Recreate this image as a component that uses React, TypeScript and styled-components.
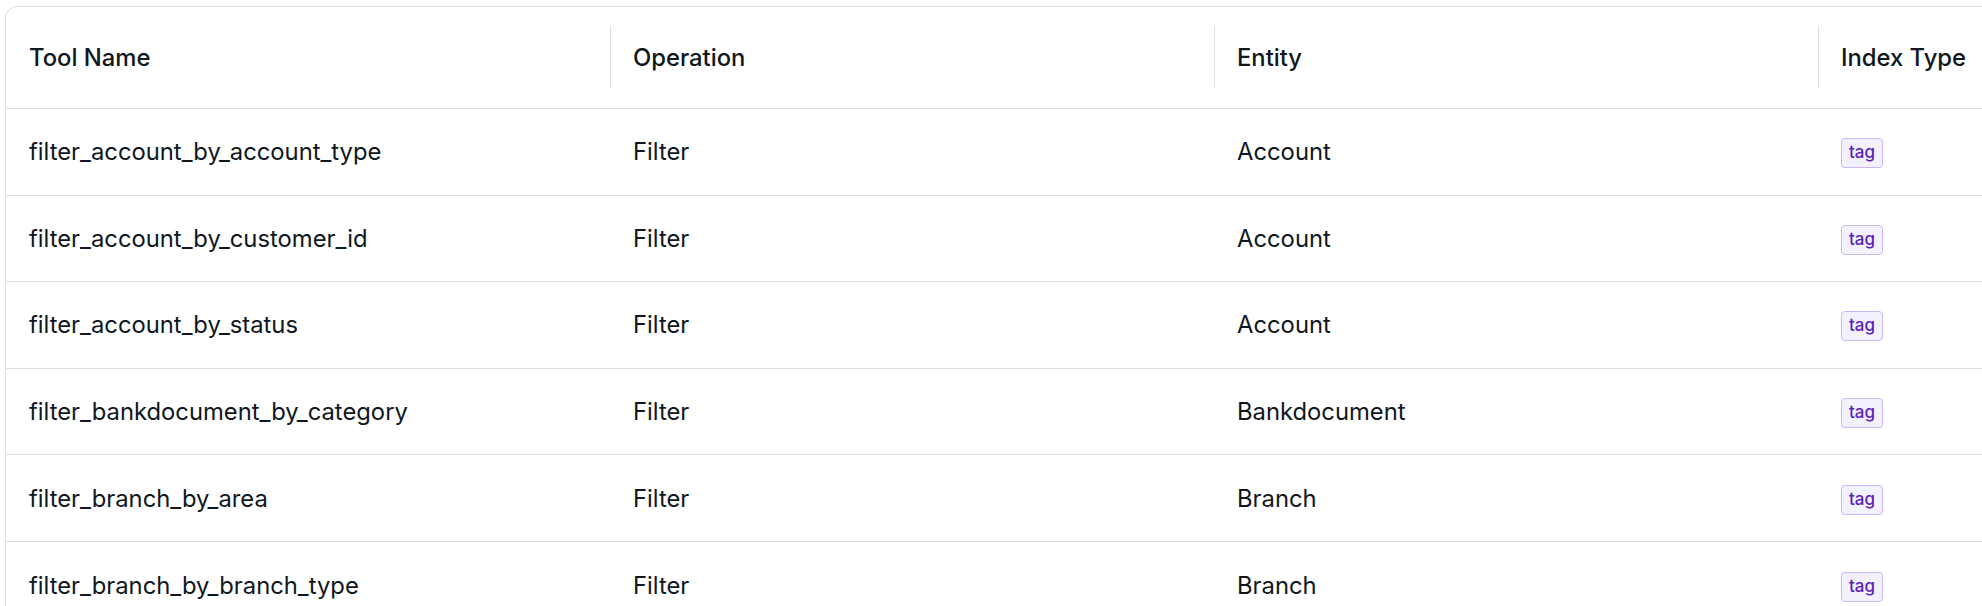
import React from "react";
import styled, { createGlobalStyle } from "styled-components";

const GlobalStyle = createGlobalStyle`
    html, body {
        margin: 0;
        padding: 0;
        background: #ffffff;
        overflow: hidden;
    }
    body {
        font-family: Inter, "Noto Sans", sans-serif;
        color: #0f1720;
    }
`;

const Page = styled.div`
    padding: 6px 0 0 5px;
`;

const Card = styled.div`
    width: 2430px;
    border: 1.3px solid #dedede;
    border-radius: 12px;
    background: #ffffff;
    overflow: hidden;
`;

const Table = styled.table`
    width: 2416px;
    border-collapse: collapse;
    table-layout: fixed;
`;

const HeadCell = styled.th`
    position: relative;
    height: 101px;
    padding: 0 23px;
    text-align: left;
    font-size: 23.8px;
    font-weight: 500;
    color: #0f1720;
    border-bottom: 1.3px solid #dedede;

    &:not(:first-child)::before {
        content: "";
        position: absolute;
        left: 0;
        top: 19px;
        bottom: 19px;
        width: 1.3px;
        background: #e2e2e2;
    }
`;

const Row = styled.tr`
    height: 86.6px;

    & + & td {
        border-top: 1.3px solid #dedede;
    }
`;

const Cell = styled.td`
    padding: 0 23px;
    font-size: 23.8px;
    font-weight: 400;
    color: #0f1720;
    white-space: nowrap;
`;

const Tag = styled.span`
    display: inline-block;
    padding: 4px 7px 5px;
    font-size: 17px;
    font-weight: 500;
    line-height: 19px;
    color: #5b21b6;
    background: #f4f1ff;
    border: 1.3px solid #c9b8ff;
    border-radius: 4px;
`;

interface ToolRow {
    name: string;
    operation: string;
    entity: string;
    indexType: string;
}

const rows: ToolRow[] = [
    { name: "filter_account_by_account_type", operation: "Filter", entity: "Account", indexType: "tag" },
    { name: "filter_account_by_customer_id", operation: "Filter", entity: "Account", indexType: "tag" },
    { name: "filter_account_by_status", operation: "Filter", entity: "Account", indexType: "tag" },
    { name: "filter_bankdocument_by_category", operation: "Filter", entity: "Bankdocument", indexType: "tag" },
    { name: "filter_branch_by_area", operation: "Filter", entity: "Branch", indexType: "tag" },
    { name: "filter_branch_by_branch_type", operation: "Filter", entity: "Branch", indexType: "tag" },
];

const columns = ["Tool Name", "Operation", "Entity", "Index Type"];

const App: React.FC = () => {
    return (
        <Page>
            <GlobalStyle />
            <Card>
                <Table>
                    <thead>
                        <tr>
                            {columns.map((col) => (
                                <HeadCell key={col}>{col}</HeadCell>
                            ))}
                        </tr>
                    </thead>
                    <tbody>
                        {rows.map((row) => (
                            <Row key={row.name}>
                                <Cell>{row.name}</Cell>
                                <Cell>{row.operation}</Cell>
                                <Cell>{row.entity}</Cell>
                                <Cell>
                                    <Tag>{row.indexType}</Tag>
                                </Cell>
                            </Row>
                        ))}
                    </tbody>
                </Table>
            </Card>
        </Page>
    );
};

export default App;
